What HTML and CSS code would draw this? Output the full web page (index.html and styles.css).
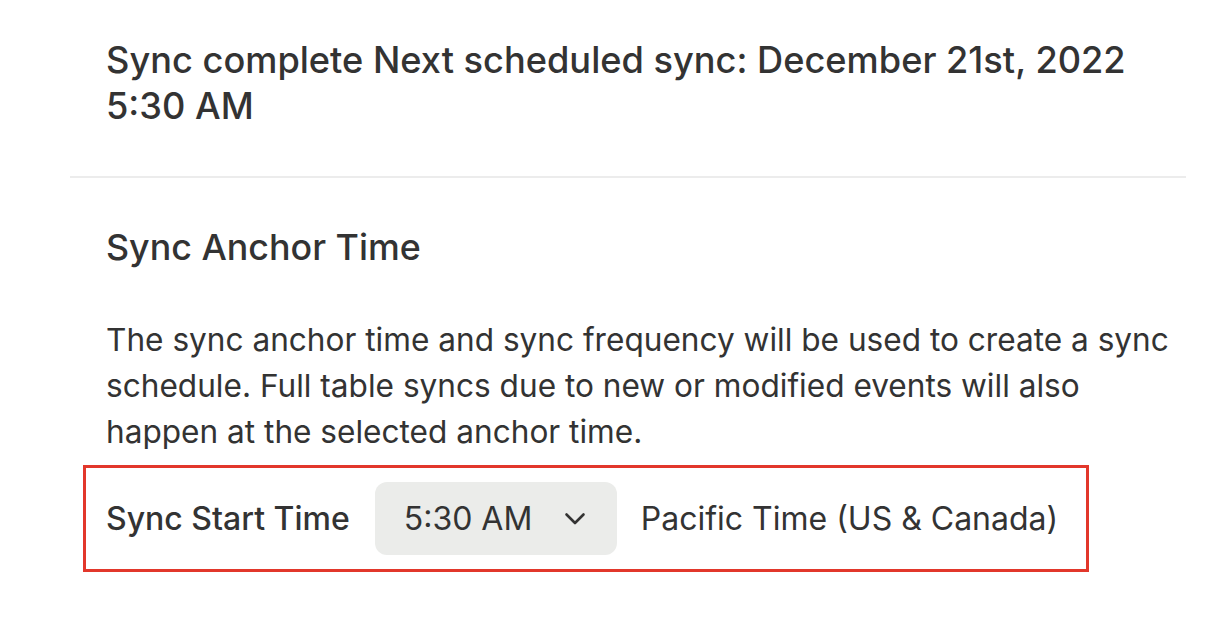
FILE: index.html
```html
<!DOCTYPE html>
<html>
<head>
<meta charset="utf-8">
<link rel="stylesheet" href="styles.css">
</head>
<body>
<div class="page">
  <div class="status">
    <h1 class="status-title">Sync complete Next scheduled sync: December 21st, 2022 5:30 AM</h1>
  </div>
  <div class="divider"></div>
  <div class="section">
    <h2 class="section-title">Sync Anchor Time</h2>
    <p class="section-desc">The sync anchor time and sync frequency will be used to create a sync schedule. Full table syncs due to new or modified events will also happen at the selected anchor time.</p>
    <div class="highlight">
      <span class="field-label">Sync Start Time</span>
      <div class="select">
        <span class="select-value">5:30 AM</span>
        <svg class="chevron" width="22" height="14" viewBox="0 0 22 14"><path d="M2.5 2.5 L11 11 L19.5 2.5" fill="none" stroke="#333" stroke-width="2.6" stroke-linecap="round" stroke-linejoin="round"/></svg>
      </div>
      <span class="tz">Pacific Time (US &amp; Canada)</span>
    </div>
  </div>
</div>
</body>
</html>
```

FILE: styles.css
```css
html, body {
  margin: 0;
  padding: 0;
  background: #ffffff;
}
body {
  font-family: Inter, "Noto Sans", sans-serif;
  color: #333333;
}
.page {
  width: 1116px;
  margin-left: 70px;
}
.status {
  padding: 37px 36px 47px 36px;
}
.status-title {
  margin: 0;
  font-size: 36.2px;
  line-height: 46px;
  font-weight: 500;
  letter-spacing: 0;
}
.divider {
  height: 2px;
  background: #ececec;
}
.section {
  padding: 46px 0 0 36px;
}
.section-title {
  margin: 0;
  font-size: 35.8px;
  line-height: 46px;
  font-weight: 500;
}
.section-desc {
  margin: 47px 0 0 0;
  font-size: 31.6px;
  line-height: 46px;
  font-weight: 400;
  width: 1080px;
}
.highlight {
  display: flex;
  align-items: center;
  margin: 10px 0 0 -23px;
  width: 1006px;
  height: 107px;
  border: 3px solid #e2372b;
  padding-left: 20px;
  box-sizing: border-box;
}
.field-label {
  font-size: 32px;
  font-weight: 500;
}
.select {
  margin-left: 25px;
  width: 242px;
  height: 73px;
  border-radius: 12px;
  background: #ebecea;
  display: flex;
  align-items: center;
  padding-left: 29px;
  box-sizing: border-box;
}
.select-value {
  font-size: 32px;
  font-weight: 400;
}
.chevron {
  margin-left: auto;
  margin-right: 31px;
}
.tz {
  margin-left: 24px;
  font-size: 32px;
  font-weight: 400;
}
```
